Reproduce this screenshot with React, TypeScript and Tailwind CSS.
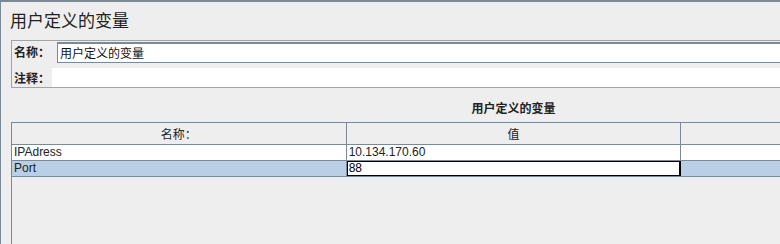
import React from 'react';

const rows = [
  { name: 'IPAdress', value: '10.134.170.60', selected: false },
  { name: 'Port', value: '88', selected: true },
];

const cjk = "font-['Noto_Sans_CJK_SC',sans-serif]";
const latin = "font-['Liberation_Sans','Noto_Sans_CJK_SC',sans-serif]";

export default function App() {
  return (
    <div className="h-[244px] w-[780px] overflow-hidden border-l border-t-2 border-[#7a8a99] bg-[#eeeeee]">
      <div className={`h-[38px] pl-[9px] pt-[6px] text-[17px] leading-[24px] text-[#222] ${cjk}`}>
        用户定义的变量
      </div>

      <div className="ml-[10px] w-[1005px] border border-[#a3a3a3]">
        <div className="flex h-[22px] items-center">
          <span className={`w-[45px] shrink-0 pl-[2px] text-[12px] font-bold text-[#222] ${cjk}`}>名称：</span>
          <div className="mt-[1px] flex h-[21px] flex-1 items-center border border-t-2 border-[#7a8a99] bg-white pl-[2px]">
            <span className={`text-[12px] text-[#111] ${cjk}`}>用户定义的变量</span>
          </div>
        </div>
        <div className="flex h-[24px] items-end">
          <span className={`flex h-[19px] w-[40px] shrink-0 items-center pl-[2px] text-[12px] font-bold text-[#222] ${cjk}`}>注释：</span>
          <div className="h-[19px] flex-1 bg-white" />
        </div>
      </div>

      <div className="ml-[10px] w-[1005px]">
        <div className={`flex h-[34px] items-center justify-center pt-[5px] text-[12px] font-bold text-[#222] ${cjk}`}>
          用户定义的变量
        </div>
        <div className="h-[122px] border-l border-t border-[#7a8a99]">
          <div className="grid h-[22px] grid-cols-3 border-b border-[#7a8a99] bg-[#eeeeee]">
            <div className={`flex items-center justify-center border-r border-[#7a8a99] text-[12px] text-[#222] ${cjk}`}>名称：</div>
            <div className={`flex items-center justify-center border-r border-[#7a8a99] text-[12px] text-[#222] ${cjk}`}>值</div>
            <div className="border-r border-[#7a8a99]" />
          </div>
          {rows.map((r) => (
            <div
              key={r.name}
              className={`grid h-[16px] grid-cols-3 border-b border-[#7a8a99] text-[12px] leading-[15px] text-[#222] ${latin} ${
                r.selected ? 'bg-[#b8cfe5]' : 'bg-white'
              }`}
            >
              <div className="border-r border-[#7a8a99] pl-[2px]">{r.name}</div>
              {r.selected ? (
                <div className="border border-r-2 border-black bg-white pl-[1px] leading-[13px] text-black">{r.value}</div>
              ) : (
                <div className="border-r border-[#7a8a99] pl-[2px]">{r.value}</div>
              )}
              <div className="border-r border-[#7a8a99]" />
            </div>
          ))}
        </div>
      </div>
    </div>
  );
}
